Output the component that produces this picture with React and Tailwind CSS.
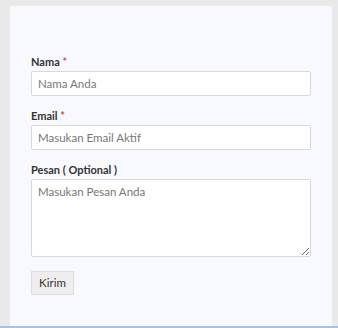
export default function App() {
  const field = 'mt-[1px] block w-[280px] bg-white border border-[#d9d9d9] rounded-[2px] px-[6px] text-[11.5px] text-[#555] placeholder:text-[#777] outline-none';
  const font = { fontFamily: 'Lato, "Open Sans", sans-serif' };
  return (
    <div className="w-[338px] h-[328px] bg-[#e9e9e9] flex flex-col overflow-hidden" style={font}>
      <div className="ml-[10px] mt-[6px] w-[322px] h-[320px] bg-[#f8f9fe] px-[21px] pt-[48px]">
        <form className="flex flex-col">
          <label className="text-[11px] leading-[16px] font-bold text-[#333]">
            Nama <span className="text-[#e74c3c]">*</span>
          </label>
          <input placeholder="Nama Anda" className={`${field} h-[25px]`} style={font} />
          <label className="mt-[12px] text-[11px] leading-[16px] font-bold text-[#333]">
            Email <span className="text-[#e74c3c]">*</span>
          </label>
          <input placeholder="Masukan Email Aktif" className={`${field} h-[25px]`} style={font} />
          <label className="mt-[12px] text-[11px] leading-[16px] font-bold text-[#333]">
            Pesan ( Optional )
          </label>
          <textarea
            placeholder="Masukan Pesan Anda"
            className={`${field} h-[78px] py-[3px] resize-y`}
            style={font}
          />
          <div className="mt-[14px] flex">
            <button
              type="button"
              className="h-[24px] w-[43px] bg-[#eeeeee] border border-[#dddddd] text-[11.5px] text-[#333]"
              style={font}
            >
              Kirim
            </button>
          </div>
        </form>
      </div>
      <div className="h-[2px] bg-[#a9c0e0]" />
    </div>
  );
}
